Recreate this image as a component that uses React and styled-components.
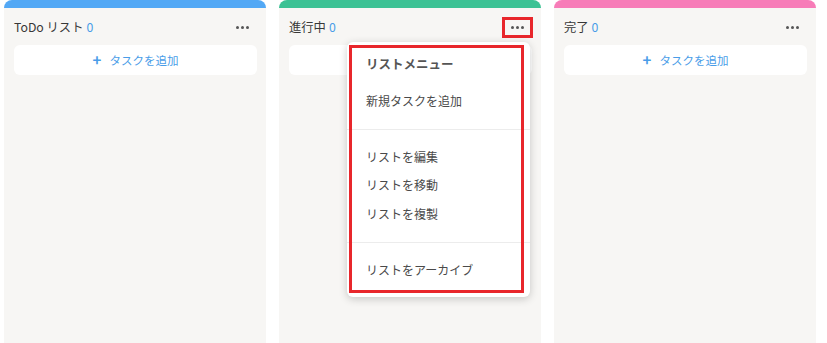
import React from "react";
import styled, { createGlobalStyle } from "styled-components";

const Global = createGlobalStyle`
  html, body { margin: 0; padding: 0; background: #ffffff; }
  body { font-family: "Noto Sans CJK JP", "Noto Sans", sans-serif; color: #333; }
  * { box-sizing: border-box; }
`;

const Board = styled.div`
  display: flex;
  gap: 13px;
  padding: 0 4px;
  height: 343px;
  overflow: hidden;
`;

const Column = styled.section`
  position: relative;
  width: 262px;
  flex: none;
  height: 100%;
  background: #f7f6f4;
  border-top: 8px solid ${(p) => p.$color};
  border-radius: 8px 8px 0 0;
  padding: 9px 8px 0 10px;
`;

const Header = styled.div`
  display: flex;
  align-items: center;
  justify-content: space-between;
  height: 21px;
  margin-bottom: 7px;
`;

const Title = styled.h2`
  margin: 0;
  font-size: 12.3px;
  font-weight: 400;
  color: #383838;
  line-height: 1;
`;

const Count = styled.span`
  color: #4a9de8;
  margin-left: 3px;
`;

const DotsButton = styled.button`
  width: 31px;
  height: 21px;
  display: flex;
  align-items: center;
  justify-content: center;
  gap: 1.5px;
  padding: 0;
  background: transparent;
  border: ${(p) => (p.$highlight ? "3px solid #e8262b" : "none")};
  cursor: pointer;
`;

const Dot = styled.span`
  width: 3.5px;
  height: 3.5px;
  border-radius: 50%;
  background: #555;
`;

const AddButton = styled.button`
  width: 243px;
  height: 30px;
  display: flex;
  align-items: center;
  justify-content: center;
  gap: 8px;
  background: #ffffff;
  border: none;
  border-radius: 6px;
  font-family: inherit;
  font-size: 11.5px;
  color: #4a9de8;
  cursor: pointer;
`;

const Plus = styled.span`
  font-size: 15px;
  font-weight: 700;
  line-height: 1;
  margin-top: -2px;
`;

const Menu = styled.div`
  position: absolute;
  left: 68px;
  top: 34px;
  width: 183px;
  height: 255px;
  background: #ffffff;
  border-radius: 6px;
  box-shadow: 0 2px 8px rgba(0, 0, 0, 0.2);
  overflow: hidden;
`;

const Highlight = styled.div`
  position: absolute;
  left: 2px;
  top: 3px;
  right: 6px;
  bottom: 4px;
  border: 3px solid #e8262b;
  pointer-events: none;
`;

const Section = styled.div`
  padding: ${(p) => p.$pad};
  border-top: ${(p) => (p.$divider ? "1px solid #ececec" : "none")};
`;

const MenuTitle = styled.div`
  height: 28px;
  display: flex;
  align-items: center;
  padding-left: 19px;
  font-size: 12.5px;
  font-weight: 700;
  color: #555;
  margin-bottom: 9px;
`;

const MenuItem = styled.div`
  height: ${(p) => p.$h || 28}px;
  display: flex;
  align-items: center;
  padding-left: 19px;
  font-size: 12px;
  color: #4a4a4a;
`;

function Dots({ highlight }) {
  return (
    <DotsButton $highlight={highlight} aria-label="menu">
      <Dot />
      <Dot />
      <Dot />
    </DotsButton>
  );
}

function AddTask() {
  return (
    <AddButton>
      <Plus>+</Plus>
      <span>タスクを追加</span>
    </AddButton>
  );
}

export default function App() {
  return (
    <>
      <Global />
      <Board>
        <Column $color="#52a8f5">
          <Header>
            <Title>
              ToDo リスト<Count>0</Count>
            </Title>
            <Dots />
          </Header>
          <AddTask />
        </Column>
        <Column $color="#3cc294">
          <Header>
            <Title>
              進行中<Count>0</Count>
            </Title>
            <Dots highlight />
          </Header>
          <AddTask />
          <Menu>
            <Section $pad="7px 0 15px">
              <MenuTitle>リストメニュー</MenuTitle>
              <MenuItem>新規タスクを追加</MenuItem>
            </Section>
            <Section $divider $pad="12px 0 15px">
              <MenuItem>リストを編集</MenuItem>
              <MenuItem $h={29}>リストを移動</MenuItem>
              <MenuItem>リストを複製</MenuItem>
            </Section>
            <Section $divider $pad="12px 0 14px">
              <MenuItem>リストをアーカイブ</MenuItem>
            </Section>
            <Highlight />
          </Menu>
        </Column>
        <Column $color="#f77cb8">
          <Header>
            <Title>
              完了<Count>0</Count>
            </Title>
            <Dots />
          </Header>
          <AddTask />
        </Column>
      </Board>
    </>
  );
}
